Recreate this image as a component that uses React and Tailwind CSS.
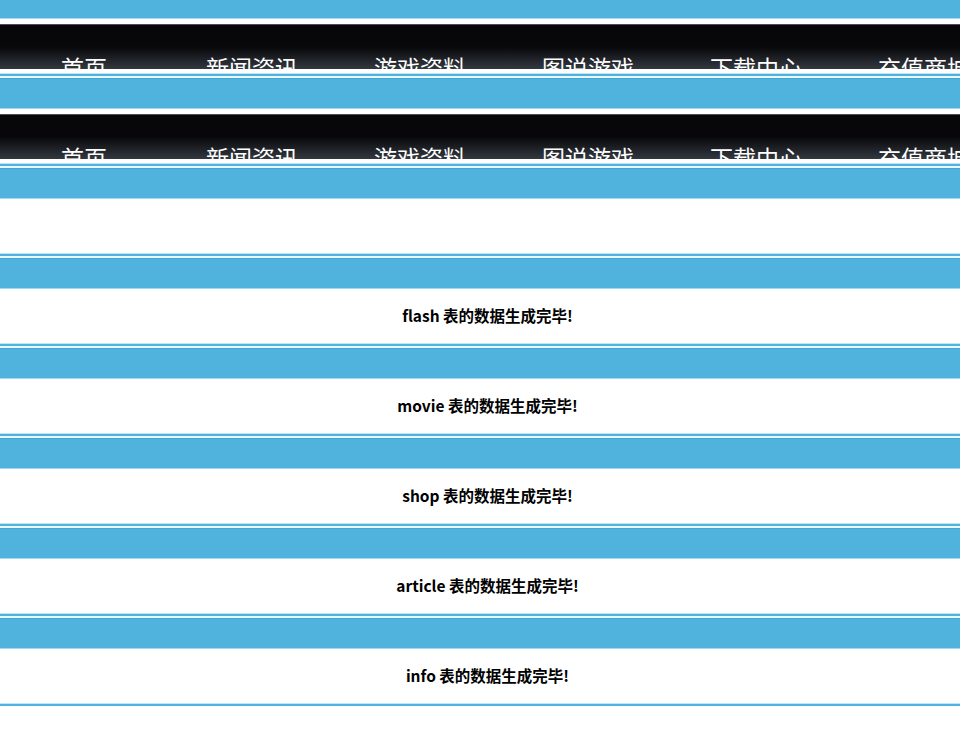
const NAV = ['首页', '新闻资讯', '游戏资料', '图说游戏', '下载中心', '充值商城'];
const TABLES = ['flash', 'movie', 'shop', 'article', 'info'];

const cjk = "font-['Noto_Sans_CJK_SC','Noto_Sans',sans-serif]";

// thin double rule + blue title bar that opens every block
function BarHead() {
  return (
    <div>
      <div className="h-px bg-[#bfe6f7]" />
      <div className="h-[2px] bg-[#4fb3dd]" />
      <div className="h-[2px] bg-[#eaf7fd]" />
      <div className="h-[31px] border-t border-b border-t-[#3fa7d7] border-b-[#9fd9f2] bg-[#4fb3dd]" />
    </div>
  );
}

function NavBlock() {
  return (
    <div>
      <BarHead />
      <div className="h-[5px] bg-white" />
      <nav className="flex h-[45px] overflow-hidden border-t border-[#4a4d52] bg-[linear-gradient(180deg,#060608_0%,#08080a_50%,#333840_100%)]">
        {NAV.map((item) => (
          <div key={item} className={`w-[168px] shrink-0 pt-[31px] text-center text-[23px] leading-none text-white ${cjk}`}>
            {item}
          </div>
        ))}
      </nav>
      <div className="h-[4px] bg-white" />
    </div>
  );
}

function TableBlock({ name }) {
  return (
    <div>
      <BarHead />
      <div className={`flex h-[54px] items-center justify-center bg-white pl-[15px] text-[15.5px] font-bold text-black ${cjk}`}>
        {name ? `${name} 表的数据生成完毕!` : ''}
      </div>
    </div>
  );
}

export default function App() {
  return (
    <div className="min-h-[752px] overflow-hidden bg-white">
      <div className="-mt-[17px]">
        <NavBlock />
        <NavBlock />
        <TableBlock />
        {TABLES.map((t) => (
          <TableBlock key={t} name={t} />
        ))}
        <div className="h-px bg-[#bfe6f7]" />
        <div className="h-[2px] bg-[#4fb3dd]" />
      </div>
    </div>
  );
}
